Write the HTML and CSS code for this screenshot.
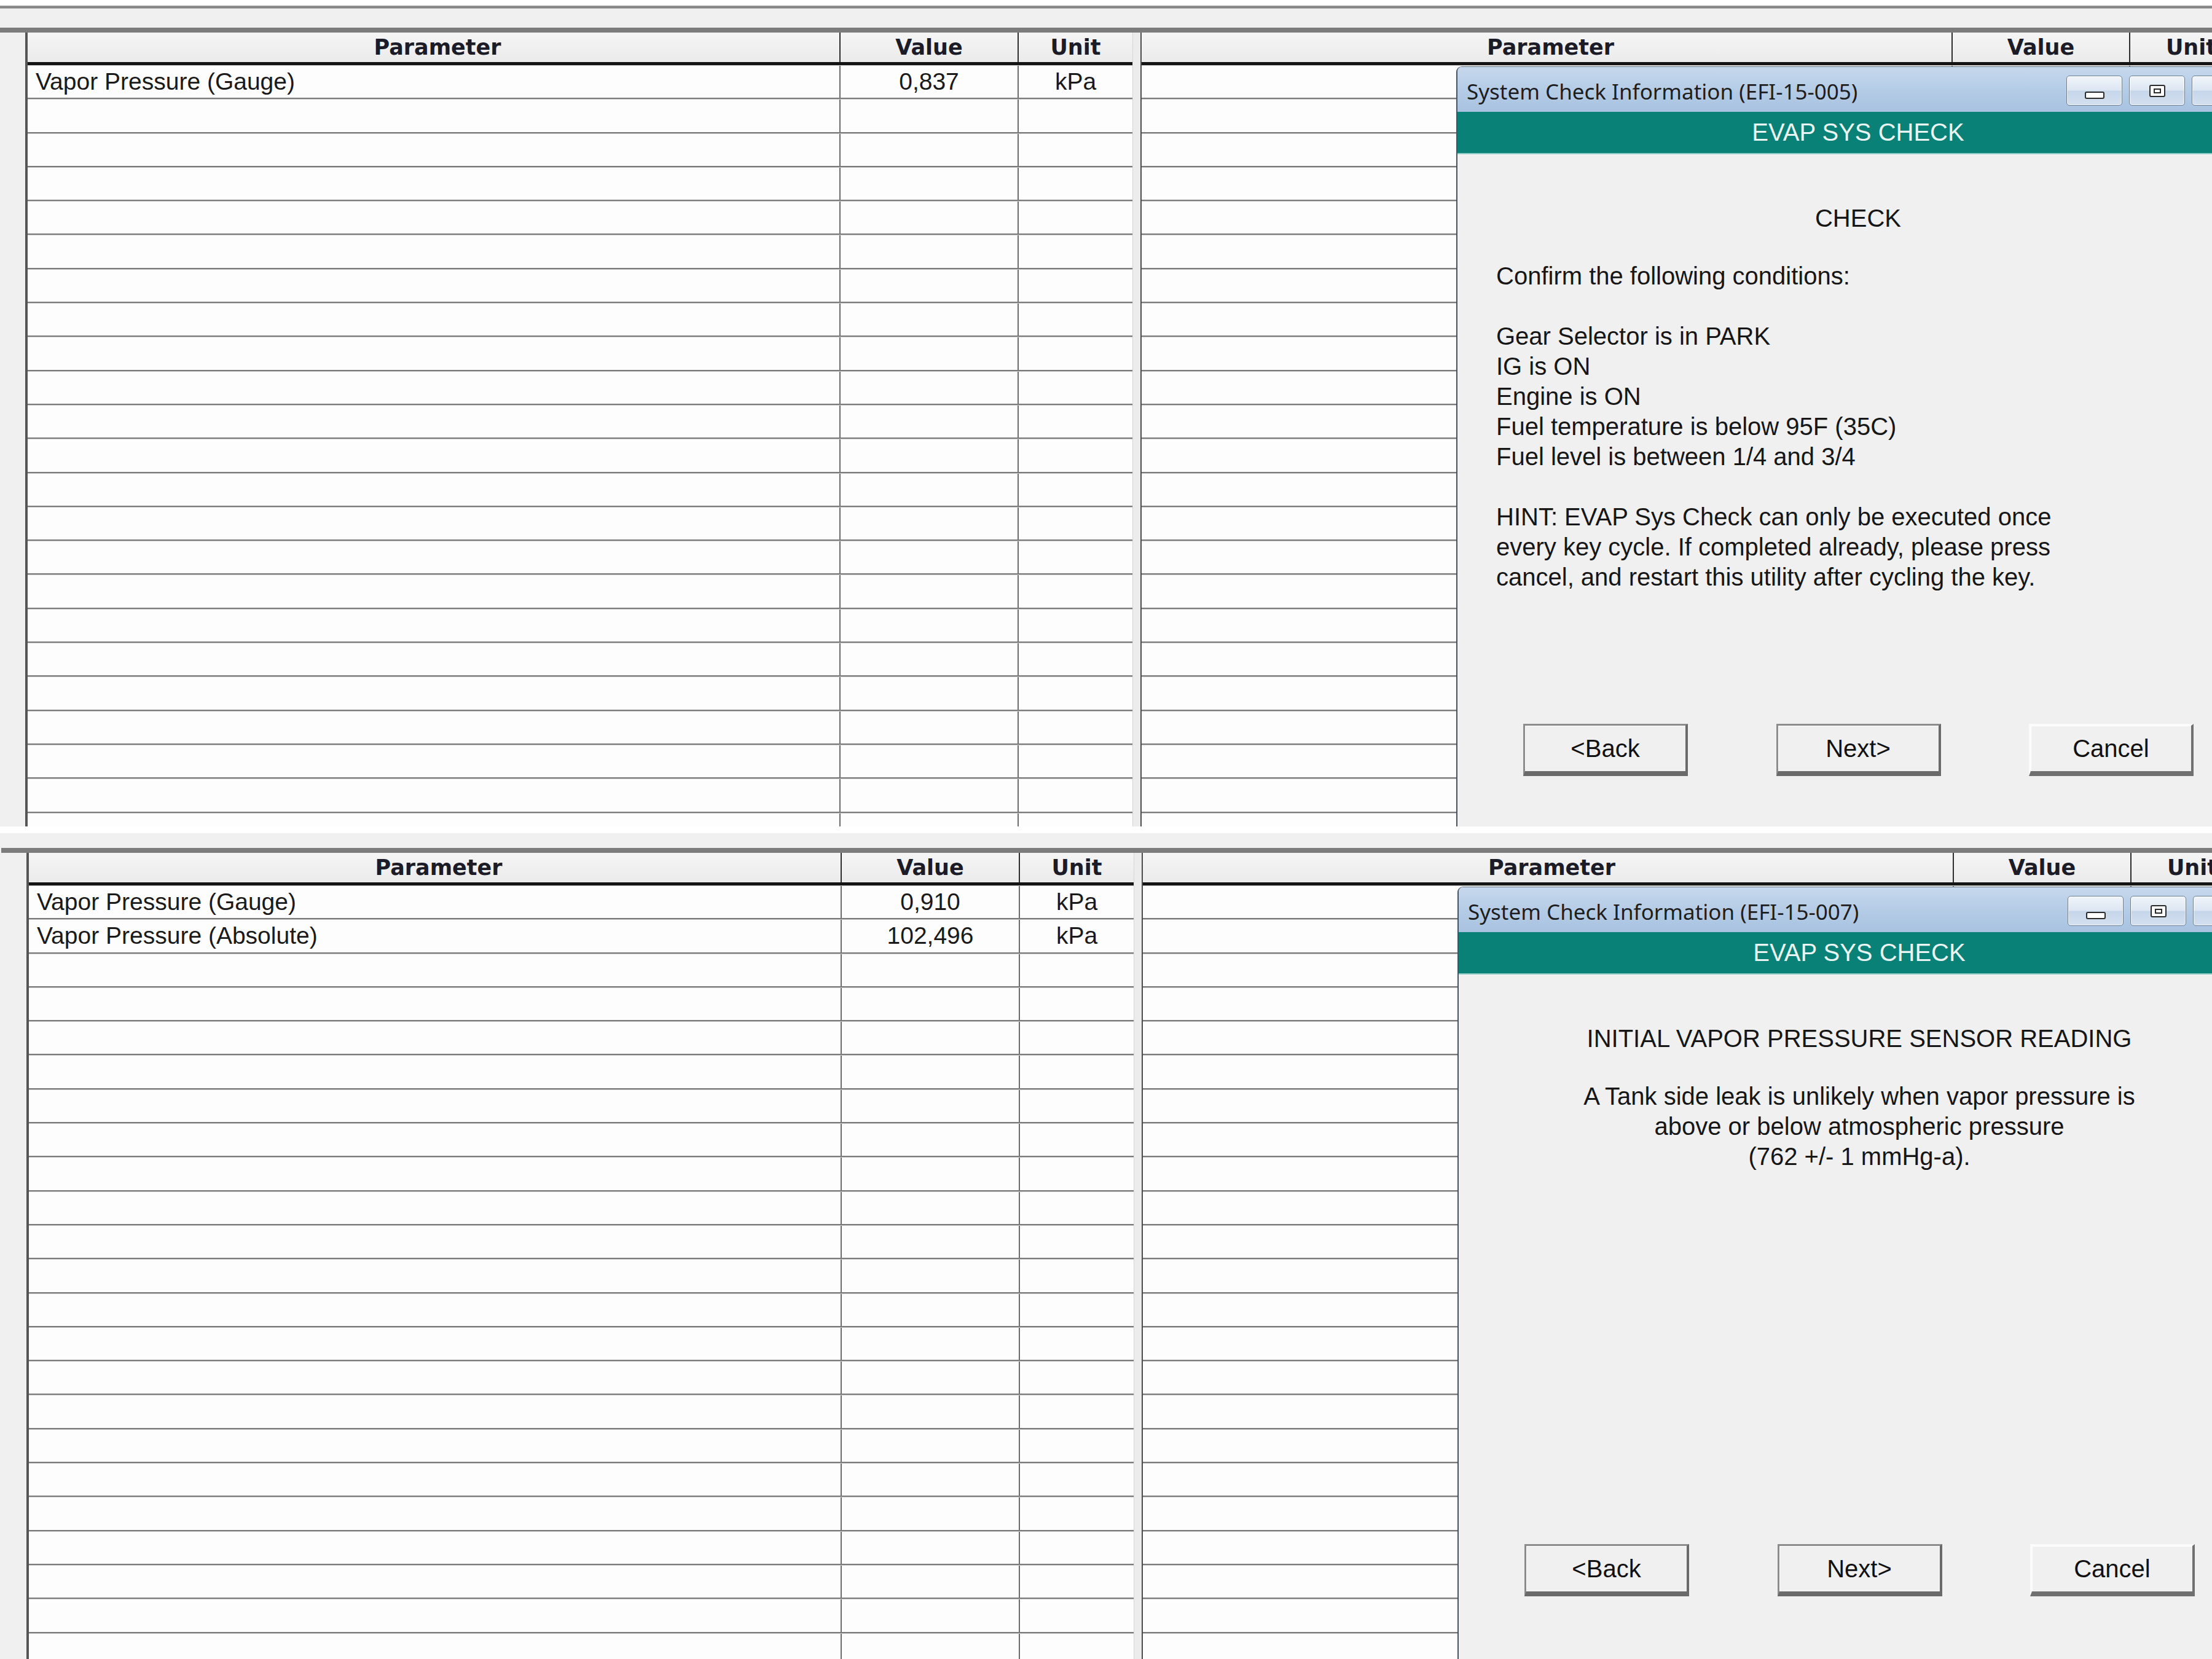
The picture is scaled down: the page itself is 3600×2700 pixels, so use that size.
FILE: index.html
```html
<!DOCTYPE html>
<html lang="en">
<head>
    <meta charset="UTF-8">
    <title>EVAP SYS CHECK</title>
    <link rel="stylesheet" href="styles.css">
</head>
<body>
    <!-- first capture: EFI-15-005 -->
    <div class="screen first">
        <div class="frame-line"></div>
        <div class="grids">
            <div class="grid left" data-fill="22">
                <div class="row head">
                    <div class="c param">Parameter</div>
                    <div class="c val">Value</div>
                    <div class="c unit">Unit</div>
                </div>
                <div class="row">
                    <div class="c param">Vapor Pressure (Gauge)</div>
                    <div class="c val">0,837</div>
                    <div class="c unit">kPa</div>
                </div>
            </div>
            <div class="splitter"></div>
            <div class="grid right" data-fill="23">
                <div class="row head">
                    <div class="c param">Parameter</div>
                    <div class="c val">Value</div>
                    <div class="c unit">Unit</div>
                </div>
            </div>

            <div class="dialog">
                <div class="dlg-title">
                    <span>System Check Information (EFI-15-005)</span>
                    <div class="tb-btns">
                        <div class="tb"><svg class="ico-min" width="32" height="12" viewBox="0 0 32 12"><rect x="1" y="1" width="30" height="10" rx="2" fill="#fff" stroke="#2b2b2b" stroke-width="2"/></svg></div>
                        <div class="tb"><svg width="26" height="20" viewBox="0 0 26 20"><rect x="1" y="1" width="24" height="18" rx="2" fill="#fff" stroke="#2b2b2b" stroke-width="2"/><rect x="8" y="7" width="10" height="6" fill="none" stroke="#2b2b2b" stroke-width="2"/></svg></div>
                        <div class="tb close"></div>
                    </div>
                </div>
                <div class="dlg-band">EVAP SYS CHECK</div>
                <div class="dlg-body">
                    <div class="dlg-text">
                        <div class="dlg-head">CHECK</div>
                        <div class="dlg-lines">
                            <p>Confirm the following conditions:</p>
                            <p>Gear Selector is in PARK<br>IG is ON<br>Engine is ON<br>Fuel temperature is below 95F (35C)<br>Fuel level is between 1/4 and 3/4</p>
                            <p>HINT: EVAP Sys Check can only be executed once<br>every key cycle. If completed already, please press<br>cancel, and restart this utility after cycling the key.</p>
                        </div>
                    </div>
                    <div class="dlg-buttons">
                        <div class="btn">&lt;Back</div>
                        <div class="btn">Next&gt;</div>
                        <div class="btn cancel">Cancel</div>
                    </div>
                </div>
            </div>
        </div>
    </div>

    <!-- second capture: EFI-15-007 -->
    <div class="screen second">
        <div class="grids">
            <div class="grid left" data-fill="21">
                <div class="row head">
                    <div class="c param">Parameter</div>
                    <div class="c val">Value</div>
                    <div class="c unit">Unit</div>
                </div>
                <div class="row">
                    <div class="c param">Vapor Pressure (Gauge)</div>
                    <div class="c val">0,910</div>
                    <div class="c unit">kPa</div>
                </div>
                <div class="row">
                    <div class="c param">Vapor Pressure (Absolute)</div>
                    <div class="c val">102,496</div>
                    <div class="c unit">kPa</div>
                </div>
            </div>
            <div class="splitter"></div>
            <div class="grid right" data-fill="23">
                <div class="row head">
                    <div class="c param">Parameter</div>
                    <div class="c val">Value</div>
                    <div class="c unit">Unit</div>
                </div>
            </div>

            <div class="dialog">
                <div class="dlg-title">
                    <span>System Check Information (EFI-15-007)</span>
                    <div class="tb-btns">
                        <div class="tb"><svg class="ico-min" width="32" height="12" viewBox="0 0 32 12"><rect x="1" y="1" width="30" height="10" rx="2" fill="#fff" stroke="#2b2b2b" stroke-width="2"/></svg></div>
                        <div class="tb"><svg width="26" height="20" viewBox="0 0 26 20"><rect x="1" y="1" width="24" height="18" rx="2" fill="#fff" stroke="#2b2b2b" stroke-width="2"/><rect x="8" y="7" width="10" height="6" fill="none" stroke="#2b2b2b" stroke-width="2"/></svg></div>
                        <div class="tb close"></div>
                    </div>
                </div>
                <div class="dlg-band">EVAP SYS CHECK</div>
                <div class="dlg-body">
                    <div class="dlg-text">
                        <div class="dlg-head">INITIAL VAPOR PRESSURE SENSOR READING</div>
                        <div class="dlg-center">
                            A Tank side leak is unlikely when vapor pressure is<br>above or below atmospheric pressure<br>(762 +/- 1 mmHg-a).
                        </div>
                    </div>
                    <div class="dlg-buttons">
                        <div class="btn">&lt;Back</div>
                        <div class="btn">Next&gt;</div>
                        <div class="btn cancel">Cancel</div>
                    </div>
                </div>
            </div>
        </div>
    </div>

    <script>
        // empty grid rows below the data
        document.querySelectorAll('.grid[data-fill]').forEach(function (grid) {
            const count = parseInt(grid.dataset.fill);
            for (let i = 0; i < count; i++) {
                const row = document.createElement('div');
                row.className = 'row';
                row.innerHTML = '<div class="c param"></div><div class="c val"></div><div class="c unit"></div>';
                grid.appendChild(row);
            }
        });
    </script>
</body>
</html>
```

FILE: styles.css
```css
body {
    margin: 0;
    width: 3600px;
    height: 2700px;
    overflow: hidden;
    background: #f0f0f0;
    font-family: "Liberation Sans", Arial, sans-serif;
    color: #1a1a1a;
}

.screen {
    display: flex;
    flex-direction: column;
    box-sizing: border-box;
    overflow: hidden;
    background: #f0f0f0;
}

.screen.first {
    height: 1345px;
    border-top: 9px solid #fff;
}

.screen.second {
    height: 1355px;
    border-top: 11px solid #fff;
    padding-top: 24px;
    padding-left: 2px;
}

.frame-line {
    height: 5px;
    margin-bottom: 31px;
    background: linear-gradient(#b0b0b0, #7a7a7a, #a8a8a8);
}

.grids {
    position: relative;
    display: flex;
    flex: 1;
    min-height: 0;
    padding-left: 41px;
    border-top: 8px solid #7c7c7c;
}

/* grids */
.grid {
    display: flex;
    flex-direction: column;
    flex-shrink: 0;
    background: #fdfdfd;
}

.grid.left {
    width: 1798px;
    border-left: 4px solid #555;
}

.grid.right {
    width: 1807px;
    border-left: 2px solid #4c4c4c;
}

.splitter {
    width: 13px;
    flex-shrink: 0;
    background: #ececec;
    border-left: 1px solid #d6d6d6;
    box-sizing: border-box;
}

.row {
    display: flex;
    flex-shrink: 0;
    height: 55.3px;
    box-sizing: border-box;
    border-top: 1px solid #c4c4c4;
    border-bottom: 2px solid #7a7a7a;
}

.row.head {
    height: 53px;
    border-top: 0;
    border-bottom: 5px solid #141414;
    background: linear-gradient(#f5f5f5, #ebebeb);
}

.c {
    display: flex;
    align-items: center;
    flex-shrink: 0;
    box-sizing: border-box;
    font-size: 39px;
    white-space: nowrap;
}

.c + .c {
    border-left: 2px solid #6a6a6a;
}

.head .c {
    justify-content: center;
    font-family: "DejaVu Sans", Verdana, sans-serif;
    font-weight: bold;
    font-size: 35px;
    color: #1c1c28;
}

.head .c + .c {
    border-left-color: #2e2e2e;
}

.c.param {
    width: 1321px;
    padding-left: 13px;
}

.c.val {
    width: 290px;
    justify-content: center;
}

.c.unit {
    width: 187px;
    justify-content: center;
}

.right .c.param {
    width: 1318px;
}

.right .c.val {
    width: 289px;
}

.right .c.unit {
    width: 200px;
}

/* system check dialog */
.dialog {
    position: absolute;
    left: 2370px;
    top: 55px;
    bottom: 0;
    width: 1306px;
    box-sizing: border-box;
    display: flex;
    flex-direction: column;
    background: #f0f0f0;
    border-left: 2px solid #46525f;
    border-top: 1px solid #5d6d80;
    border-top-left-radius: 9px;
    overflow: hidden;
}

.dlg-title {
    height: 73px;
    flex-shrink: 0;
    display: flex;
    align-items: flex-start;
    padding: 0 9px 0 15px;
    background: linear-gradient(#c6d8ed, #b2cae5 60%, #a8c2e0);
}

.dlg-title span {
    font-family: "Noto Sans", sans-serif;
    font-size: 35px;
    line-height: 46px;
    margin-top: 17px;
    color: #1e1e1e;
}

.tb-btns {
    margin-left: auto;
    margin-top: 14px;
    display: flex;
    gap: 11px;
}

.tb {
    width: 91px;
    height: 49px;
    box-sizing: border-box;
    display: flex;
    align-items: center;
    justify-content: center;
    border: 1px solid #6c809c;
    border-radius: 5px;
    background: linear-gradient(#f1f5fa, #dce6f2 48%, #c6d6ea 52%, #d3e0f0);
    box-shadow: inset 0 0 0 1px rgba(255, 255, 255, 0.7);
}

.tb .ico-min {
    margin-top: 14px;
}

.tb.close {
    width: 100px;
}

.dlg-band {
    height: 67px;
    flex-shrink: 0;
    display: flex;
    align-items: center;
    justify-content: center;
    background: #0a8177;
    border-bottom: 2px solid #8ccbc3;
    color: #e9f5f2;
    font-size: 40px;
}

.dlg-body {
    flex: 1;
    padding-top: 80px;
    font-size: 40px;
    line-height: 49px;
    color: #161616;
}

.dlg-text {
    height: 847px;
}

.dlg-head {
    text-align: center;
    margin-bottom: 45px;
}

.dlg-lines {
    padding-left: 63px;
}

.dlg-lines p {
    margin: 0 0 49px;
}

.dlg-center {
    text-align: center;
}

.dlg-buttons {
    display: flex;
    justify-content: space-between;
    padding: 0 106px 0 107px;
}

.btn {
    width: 268px;
    height: 85px;
    box-sizing: border-box;
    display: flex;
    align-items: center;
    justify-content: center;
    background: #f0f0f0;
    border-style: solid;
    border-width: 3px 4px 8px 3px;
    border-color: #8c8c8c #6a6a6a #6a6a6a #8c8c8c;
    box-shadow: inset 1px 1px 0 #fff;
    font-size: 40px;
    color: #111;
}

.btn.cancel {
    border-color: #fbfbfb #707070 #707070 #fbfbfb;
}
```
